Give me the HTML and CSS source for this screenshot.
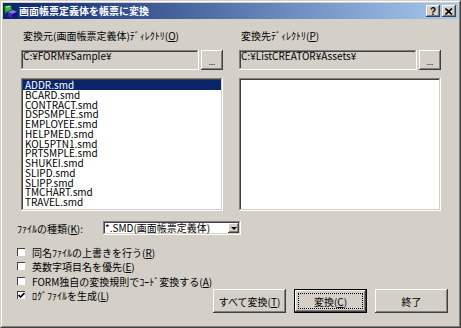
FILE: index.html
```html
<!DOCTYPE html>
<html lang="ja">
<head>
  <meta charset="UTF-8">
  <title>画面帳票定義体を帳票に変換</title>
  <link rel="stylesheet" href="styles.css">
</head>
<body>
<div class="window">
  <div class="frame">
    <!-- タイトルバー -->
    <div class="titlebar">
      <svg class="app-icon" width="15" height="15" viewBox="0 0 15 15">
        <path d="M1 2 L8 1 L9 6 L4 8 L2 10 L2 7 Z" fill="#3cb043" stroke="#0b5a10" stroke-width="0.8"/>
        <path d="M3 3 L7 2.5" stroke="#c8f0c0" stroke-width="1"/>
        <path d="M5 8 L10 6 L14 8 L9 10 Z" fill="#8a7cf0"/>
        <path d="M5 8 L9 10 L9 14 L5 12 Z" fill="#3a2cb8"/>
        <path d="M9 10 L14 8 L14 12 L9 14 Z" fill="#1a1080"/>
      </svg>
      <span class="title">画面帳票定義体を帳票に変換</span>
      <span class="cap-btn help">?</span>
      <span class="cap-btn close">
        <svg width="8" height="7" viewBox="0 0 8 7"><path d="M0.5 0.5 L7 6.5 M7 0.5 L0.5 6.5" stroke="#000" stroke-width="1.6"/></svg>
      </span>
    </div>

    <div class="content">
      <div class="columns">
        <div class="col">
          <div class="lbl">変換元(画面帳票定義体)ﾃﾞｨﾚｸﾄﾘ(<u>O</u>)</div>
          <div class="path-row">
            <div class="path">C:¥FORM¥Sample¥</div>
            <span class="btn browse">...</span>
          </div>
          <ul class="list">
            <li class="selected">ADDR.smd</li>
            <li>BCARD.smd</li>
            <li>CONTRACT.smd</li>
            <li>DSPSMPLE.smd</li>
            <li>EMPLOYEE.smd</li>
            <li>HELPMED.smd</li>
            <li>KOL5PTN1.smd</li>
            <li>PRTSMPLE.smd</li>
            <li>SHUKEI.smd</li>
            <li>SLIPD.smd</li>
            <li>SLIPP.smd</li>
            <li>TMCHART.smd</li>
            <li>TRAVEL.smd</li>
          </ul>
        </div>
        <div class="col">
          <div class="lbl">変換先ﾃﾞｨﾚｸﾄﾘ(<u>P</u>)</div>
          <div class="path-row">
            <div class="path">C:¥ListCREATOR¥Assets¥</div>
            <span class="btn browse">...</span>
          </div>
          <ul class="list"></ul>
        </div>
      </div>

      <div class="type-row">
        <span class="type-lbl">ﾌｧｲﾙの種類(<u>K</u>):</span>
        <div class="combo">
          <span class="combo-text">*.SMD(画面帳票定義体)</span>
          <span class="combo-btn"><i class="arrow"></i></span>
        </div>
      </div>

      <div class="lower">
        <div class="options">
          <div class="check"><span class="box"></span>同名ﾌｧｲﾙの上書きを行う(<u>R</u>)</div>
          <div class="check"><span class="box"></span>英数字項目名を優先(<u>E</u>)</div>
          <div class="check"><span class="box"></span>FORM独自の変換規則でｺｰﾄﾞ変換する(<u>A</u>)</div>
          <div class="check"><span class="box">
            <svg width="7" height="7" viewBox="0 0 7 7"><path d="M0.5 3 L2.5 5 L6.5 1" fill="none" stroke="#000" stroke-width="1.6"/></svg>
          </span>ﾛｸﾞﾌｧｲﾙを生成(<u>L</u>)</div>
        </div>
        <div class="actions">
          <span class="btn push">すべて変換(<u>T</u>)</span>
          <span class="btn push default"><span class="focus">変換(<u>C</u>)</span></span>
          <span class="btn push">終了</span>
        </div>
      </div>
    </div>
  </div>
</div>
</body>
</html>
```

FILE: styles.css
```css
* {
  margin: 0;
  padding: 0;
  box-sizing: border-box;
}
ul {
  list-style: none
}
u {
  text-decoration: underline;
  text-underline-offset: 1px;
}
body {
  width: 461px;
  height: 328px;
  background-color: #d4d0c8;
  font: 10px "Noto Sans CJK JP", sans-serif;
  color: #000;
}
.window {
  width: 461px;
  height: 328px;
  border: 1px solid;
  border-color: #d4d0c8 #404040 #404040 #d4d0c8;
}
.frame {
  height: 100%;
  border: 1px solid;
  border-color: #fff #808080 #808080 #fff;
  padding: 1px;
  display: flex;
  flex-direction: column;
}
/* タイトルバー */
.titlebar {
  height: 16px;
  background: linear-gradient(to right, #0a246a, #a6caf0);
  display: flex;
  align-items: center;
  padding: 0 2px 0 0;
}
.app-icon {
  margin-right: 1px;
}
.title {
  flex: 1;
  color: #fff;
  font-weight: bold;
  line-height: 16px;
}
.cap-btn {
  width: 14px;
  height: 12px;
  display: flex;
  align-items: center;
  justify-content: center;
  background-color: #d4d0c8;
  box-shadow: inset -1px -1px #404040, inset 1px 1px #fff, inset -2px -2px #808080;
  font: bold 10px "Liberation Sans", sans-serif;
}
.cap-btn.close {
  margin-left: 2px;
}
/* 共通ボタン */
.btn {
  display: flex;
  align-items: center;
  justify-content: center;
  background-color: #d4d0c8;
  box-shadow: inset -1px -1px #404040, inset 1px 1px #fff, inset -2px -2px #808080;
}
.content {
  flex: 1;
  padding: 11px 10px 0 14px;
}
.columns {
  display: flex;
  gap: 16px;
  margin: 0 6px 0 4px;
}
.col {
  width: 202px;
}
.lbl {
  height: 12px;
  line-height: 12px;
  padding-left: 2px;
}
.path-row {
  display: flex;
  gap: 2px;
  margin-top: 8px;
  height: 20px;
}
.path {
  flex: 1;
  padding: 1px 2px;
  line-height: 10px;
  box-shadow: inset -1px -1px #fff, inset 1px 1px #808080, inset -2px -2px #d4d0c8, inset 2px 2px #404040;
}
.browse {
  width: 22px;
  font-size: 8px;
  padding-top: 3px;
}
.list {
  margin-top: 8px;
  height: 133px;
  padding: 2px;
  background-color: #fff;
  box-shadow: inset -1px -1px #fff, inset 1px 1px #808080, inset -2px -2px #d4d0c8, inset 2px 2px #404040;
}
.list li {
  height: 9.75px;
  line-height: 9.75px;
  padding-left: 2px;
}
.list li.selected {
  background-color: #0a246a;
  color: #fff;
}
/* 下部 */
.type-row {
  display: flex;
  align-items: center;
  margin-top: 10px;
  height: 14px;
}
.type-lbl {
  width: 86px;
}
.combo {
  width: 138px;
  height: 14px;
  display: flex;
  align-items: center;
  padding: 2px;
  background-color: #fff;
  box-shadow: inset -1px -1px #fff, inset 1px 1px #808080, inset -2px -2px #d4d0c8, inset 2px 2px #404040;
}
.combo-text {
  flex: 1;
  line-height: 10px;
}
.combo-btn {
  width: 11px;
  height: 10px;
  display: flex;
  align-items: center;
  justify-content: center;
  background-color: #d4d0c8;
  box-shadow: inset -1px -1px #404040, inset 1px 1px #fff, inset -2px -2px #808080;
}
.arrow {
  border: 3px solid transparent;
  border-top: 3px solid #000;
  border-bottom: 0;
}
.lower {
  display: flex;
  justify-content: space-between;
  align-items: flex-start;
  margin-top: 10px;
}
.check {
  display: flex;
  align-items: center;
  height: 14.5px;
  white-space: nowrap;
}
.box {
  width: 9px;
  height: 9px;
  margin-right: 6px;
  display: flex;
  align-items: center;
  justify-content: center;
  background-color: #fff;
  box-shadow: inset -1px -1px #d4d0c8, inset 1px 1px #404040;
}
.actions {
  display: flex;
  gap: 8px;
  margin-top: 44px;
}
.push {
  width: 73px;
  height: 24px;
}
.push.default {
  box-shadow: inset 0 0 0 1px #000, inset -2px -2px #404040, inset 2px 2px #fff, inset -3px -3px #808080;
}
.focus {
  border: 1px dotted #000;
  width: 65px;
  height: 16px;
  display: flex;
  align-items: center;
  justify-content: center;
}
```
